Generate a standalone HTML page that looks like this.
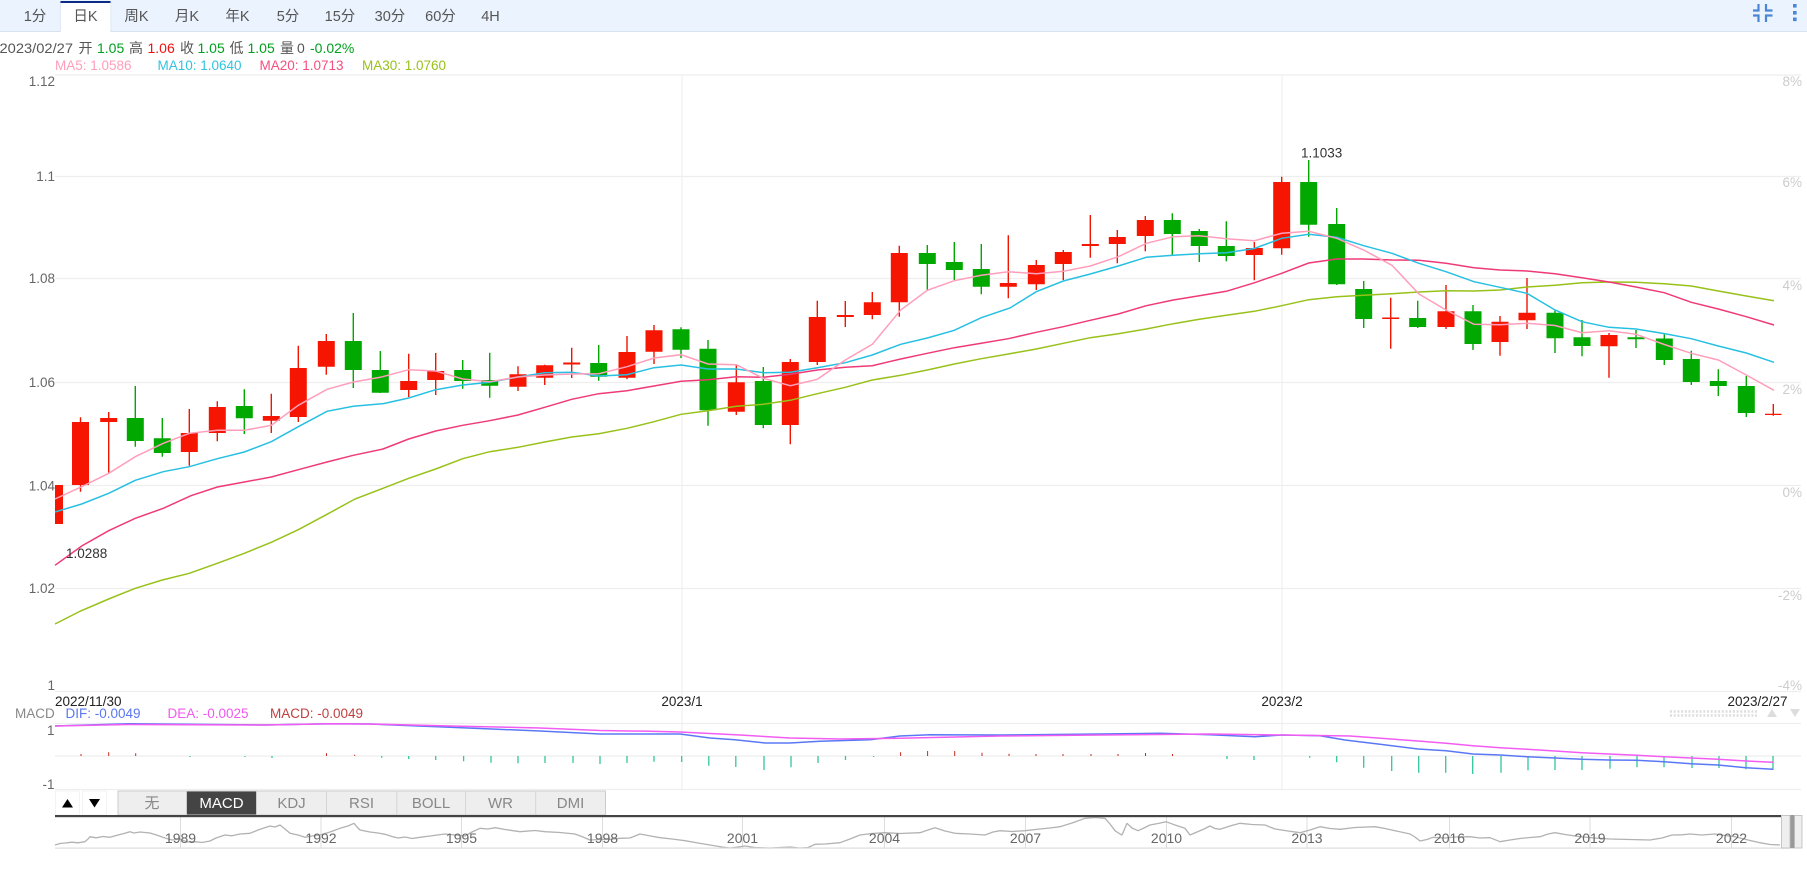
<!DOCTYPE html>
<html lang="zh"><head><meta charset="utf-8"><title>K</title>
<style>
html,body{margin:0;padding:0;background:#fff;width:1807px;height:873px;overflow:hidden}
svg{display:block;font-family:"Liberation Sans","Noto Sans CJK SC",sans-serif}
.t{font-size:14.5px;fill:#555;text-anchor:middle}
.i{font-size:14px;fill:#555}
.g{fill:#00a020}.r{fill:#f01010}
.m{font-size:13.5px}
.l{font-size:13.5px;fill:#666;text-anchor:end}
.p{font-size:13.5px;fill:#ccc;text-anchor:end}
.d{font-size:13.5px;fill:#222}
.y{font-size:14px;fill:#666;text-anchor:middle}
.b{font-size:15px;fill:#888;text-anchor:middle}
</style></head><body>
<svg width="1807" height="873" viewBox="0 0 1807 873" xmlns="http://www.w3.org/2000/svg">
<!-- toolbar -->
<rect x="0" y="0" width="1807" height="31" fill="#ebf3fe"/>
<rect x="0" y="31" width="1807" height="1" fill="#d8e3f2"/>
<rect x="60.5" y="1" width="50" height="31" fill="#fff"/>
<rect x="60" y="1" width="0.8" height="31" fill="#d8e3f2"/><rect x="110.5" y="1" width="0.8" height="31" fill="#d8e3f2"/>
<rect x="60.5" y="1" width="50" height="2" fill="#0b2c86"/>
<text class="t" x="35" y="21">1分</text>
<text class="t" x="85.5" y="21">日K</text>
<text class="t" x="136.5" y="21">周K</text>
<text class="t" x="187" y="21">月K</text>
<text class="t" x="237.5" y="21">年K</text>
<text class="t" x="288" y="21">5分</text>
<text class="t" x="340" y="21">15分</text>
<text class="t" x="390" y="21">30分</text>
<text class="t" x="440.5" y="21">60分</text>
<text class="t" x="490.5" y="21">4H</text>
<path d="M1758.5 4v6.5H1753M1766 4v6.5h6.5M1753 15.5h5.5V22M1772.500 15.500H1766V22" fill="none" stroke="#4a86d8" stroke-width="2.200"/>
<rect x="1793" y="4" width="3.600" height="3.600" fill="#4a86d8"/><rect x="1793" y="11" width="3.600" height="3.600" fill="#4a86d8"/><rect x="1793" y="17.500" width="3.600" height="3.600" fill="#4a86d8"/>
<!-- info line -->
<text class="i" x="-0.500" y="53" textLength="73.500" lengthAdjust="spacingAndGlyphs">2023/02/27</text>
<text class="i" x="78.500" y="53">开</text><text class="i g" x="97" y="53">1.05</text>
<text class="i" x="129" y="53">高</text><text class="i r" x="147.500" y="53">1.06</text>
<text class="i" x="180" y="53">收</text><text class="i g" x="197.500" y="53">1.05</text>
<text class="i" x="229.500" y="53">低</text><text class="i g" x="247.500" y="53">1.05</text>
<text class="i" x="280" y="53">量</text><text class="i" x="297" y="53">0</text>
<text class="i g" x="310" y="53">-0.02%</text>
<text class="m" x="55" y="70" fill="#ff9ebb">MA5: 1.0586</text>
<text class="m" x="157.500" y="70" fill="#33c3e0">MA10: 1.0640</text>
<text class="m" x="259.500" y="70" fill="#f5507f">MA20: 1.0713</text>
<text class="m" x="362" y="70" fill="#98c11a">MA30: 1.0760</text>
<!-- grid -->
<path d="M55 75H1801M55 176.500H1801M55 278.500H1801M55 382.500H1801M55 485.500H1801M55 588.500H1801M55 691.500H1801M55 723.500H1801M55 756H1801M55 789.500H1801" stroke="#eee" stroke-width="1.200" fill="none"/>
<path d="M682 75V790M1282 75V790" stroke="#f0f0f0" stroke-width="1.200" fill="none"/>
<!-- axis labels -->
<text class="l" x="55" y="86">1.12</text><text class="l" x="55" y="181">1.1</text><text class="l" x="55" y="283">1.08</text><text class="l" x="55" y="387">1.06</text><text class="l" x="55" y="490.500">1.04</text><text class="l" x="55" y="593">1.02</text><text class="l" x="55" y="690">1</text>
<text class="p" x="1802" y="86">8%</text><text class="p" x="1802" y="187">6%</text><text class="p" x="1802" y="290">4%</text><text class="p" x="1802" y="394">2%</text><text class="p" x="1802" y="497">0%</text><text class="p" x="1802" y="600">-2%</text><text class="p" x="1802" y="690">-4%</text>
<text class="d" x="55" y="706">2022/11/30</text>
<text class="d" x="682" y="706" text-anchor="middle">2023/1</text>
<text class="d" x="1282" y="706" text-anchor="middle">2023/2</text>
<text class="d" x="1787.500" y="706" text-anchor="end">2023/2/27</text>
<!-- candles -->
<path stroke="#f01500" stroke-width="1.400" fill="none" d="M80.500 417.300V491.700M108.700 412V473M189.300 409V465.700M217.300 401.300V441.300M271.300 393.700V433M298.300 345.700V422M326.300 334V374.700M408.700 353.700V397M435.700 353V395M518 366.300V391M544.700 364.700V385M571.700 347.700V378M627 336V379.300M654 325V364M736.300 365V415M790.300 359V444.300M817.300 300.700V365M845.300 301V327M872.300 292V319.300M899.300 245.700V316.700M1008.300 235.300V298.300M1036.300 260V290M1063.300 250V280M1090.300 215V257.700M1117.300 230V263.300M1145.300 216V251.300M1254.300 242V280.300M1281.700 176.700V254.700M1390.700 297.700V348.700M1446 285V329M1500 316V355.700M1527 278V329M1609 333V377.700M1773.300 404V415.700"/>
<path fill="#f51500" d="M55 485h8v39h-8zM72 422h17v63h-17zM100.200 418h17v4h-17zM180.800 433h17v19h-17zM208.800 407h17v26h-17zM262.800 416h17v4.700h-17zM289.800 368h17v49h-17zM317.800 341h17v25.700h-17zM400.200 381h17v9h-17zM427.200 371h17v9h-17zM509.500 374.300h17v12.400h-17zM536.200 365.300h17v12.400h-17zM563.200 362.500h17v2h-17zM618.500 352h17v25.700h-17zM645.500 330.300h17v21.400h-17zM727.800 382.300h17v29.400h-17zM781.800 362h17v63h-17zM808.800 317h17v45h-17zM836.800 315h17v2h-17zM863.800 302.300h17v12.700h-17zM890.800 253h17v49.300h-17zM999.800 283h17v3.700h-17zM1027.800 265h17v19.300h-17zM1054.800 252h17v12h-17zM1081.800 244h17v2h-17zM1108.800 237h17v7h-17zM1136.800 220h17v16h-17zM1245.800 248h17v7h-17zM1273.200 182h17v66.300h-17zM1382.200 317.500h17v1.500h-17zM1437.500 311.300h17v15.700h-17zM1491.500 321.700h17v20.300h-17zM1518.500 312.700h17v7.600h-17zM1600.500 335h17v11.300h-17zM1765 413.700h16.500v1.300h-16.500z"/>
<path stroke="#00a800" stroke-width="1.400" fill="none" d="M135.300 386V446.700M162.300 418V456.700M244.300 389.300V434M353.300 313V388M380.300 351V393M462.700 360V388.700M489.700 352.700V397.700M598.700 345V380.700M681 327.300V358M708 340V425.700M763.300 367V428.300M927.300 245V290.300M954.300 242V280M981.300 244V294.300M1172.300 213.300V255.300M1199.300 229V262M1226.300 221.300V261.300M1308.700 160V236.700M1336.700 208V285M1363.700 281V328M1417.700 300.700V328M1473 305V350M1555 310V353M1582 320V356.300M1636 330V348M1664.300 333.500V365M1691.300 350.700V385M1718.300 369.300V396M1746.300 376V417"/>
<path fill="#00a800" d="M126.800 418h17v23h-17zM153.800 438.300h17v14.700h-17zM235.800 406h17v12.300h-17zM344.800 341h17v29h-17zM371.800 370h17v22.700h-17zM454.200 370h17v11h-17zM481.200 380h17v5.700h-17zM590.200 363h17v13.700h-17zM672.500 329.300h17v20.400h-17zM699.500 348.700h17v61.600h-17zM754.800 381h17v44h-17zM918.800 253h17v11h-17zM945.800 262h17v8h-17zM972.800 269h17v17.700h-17zM1163.800 220h17v14h-17zM1190.800 231h17v15h-17zM1217.800 246h17v10h-17zM1300.200 182h17v42.700h-17zM1328.200 224h17v60.300h-17zM1355.200 289h17v30h-17zM1409.200 318h17v9h-17zM1464.500 311.300h17v32.700h-17zM1546.500 312.700h17v25.600h-17zM1573.500 337.300h17v8.700h-17zM1627.500 337.300h17v2h-17zM1655.800 338.500h17v21.500h-17zM1682.800 359h17v23h-17zM1709.800 381h17v5h-17zM1737.800 386h17v27h-17z"/>
<!-- MA lines -->
<polyline fill="none" stroke="#98c11a" stroke-width="1.500" points="55,624 80.500,611 108.700,599 135.300,588.300 162.300,580 189.300,573.300 217.300,563.300 244.300,553.300 271.300,542.300 298.300,529.700 327,514.300 355,499 383,488.300 408.700,478.300 435.700,469 462.700,458.700 489.700,451.700 518,447.300 544.700,442 571.700,437 598.700,433.700 627,428.300 654,421.700 681,414.300 708,410.700 736.300,406.300 763.300,404.300 790.300,400.300 817.300,393.700 845.300,387.300 872.300,380 900.700,375.300 927.300,370 954.300,364 981.300,358.700 1008.300,354 1036.300,349 1063.300,343.300 1090.300,337.700 1118.300,333.700 1146.300,329 1173.300,323.700 1199.300,319.300 1226.300,315.300 1254.300,311.300 1281.700,305.700 1308.700,299.700 1336.700,296.700 1363.700,295.300 1392,293.700 1419,292 1446,290.700 1474,291 1500,290 1527,287 1555,285.300 1582,282.700 1609,282 1636,282.300 1664.300,283.800 1691.300,286 1718.300,291 1746.300,296 1774,300.700"/>
<polyline fill="none" stroke="#ef3a78" stroke-width="1.500" points="55,565.300 81.700,546 108.700,530.700 135.300,518.300 163.300,508.300 191,495.700 217.300,487 244.300,482 271.300,477 298.300,469.700 327,462 353.300,455.300 383,449 408.700,439 435.700,431 462.700,425.300 489.700,420.700 518,415 544.700,407.300 571.700,399.300 598.700,393.700 627,390.700 654,386 681,381.300 708,379.700 736.300,376.700 763.300,377.300 790.300,374.300 817.300,370 845.300,367.300 872.300,365.700 900.700,359 927.300,353.300 954.300,347.700 981.300,343.300 1008.300,338.700 1036.300,332.300 1063.300,326.700 1090.300,320.300 1118.300,314 1146.300,305.700 1173.300,300 1199.300,295.700 1226.300,291.300 1254.300,282.800 1281.700,273.300 1308.700,263 1336.700,259 1363.700,259 1392,260 1419,260.300 1446,263.300 1474,267.700 1500,270 1527,271 1555,273.700 1582,277.700 1609,282 1636,287 1664.300,292.700 1691.300,302.300 1718.300,309 1746.300,316.700 1774,325"/>
<polyline fill="none" stroke="#27c0e2" stroke-width="1.500" points="55,512 81.700,504 108.700,493.300 135.300,480.300 163.300,471.700 189.300,466.700 217.300,458.700 244.300,452 271.300,441.700 298.300,426.700 327,411.300 353.300,406.300 383,403.700 408.700,398 435.700,389.700 462.700,385 489.700,382.300 518,377 544.700,372.700 571.700,372.300 598.700,376 627,374.700 654,367.700 681,365 708,369 736.300,369 763.300,372.700 790.300,372.300 817.300,367.700 845.300,362.700 872.300,355 900.700,344.300 927.300,338 954.300,330.300 981.300,317.700 1010,308 1036.300,291.700 1063.300,281 1090.300,274 1118.300,266 1146.300,257.300 1173.300,255.300 1199.300,253.700 1226.300,252.700 1254.300,248.500 1281.700,238.300 1308.700,234.300 1336.700,237.300 1363.700,245.700 1392,253.300 1419,263.300 1446,271.700 1474,281.700 1500,287.300 1527,293.300 1555,310 1582,321.700 1609,327.300 1636,329 1664.300,333.600 1691.300,338.700 1718.300,346 1746.300,353 1774,362.300"/>
<polyline fill="none" stroke="#ff9ebb" stroke-width="1.500" points="55,499 81.700,486.700 108.700,473.300 135.300,456.700 163.300,443.300 189.300,433.300 217.300,430.300 244.300,430.300 271.300,425.300 298.300,405.300 327,389.300 353.300,382 380.300,377.300 408.700,369.700 435.700,371 462.700,379 489.700,381.700 518,377 544.700,375 571.700,374 598.700,373.700 627,366.700 654,358 681,354.700 708,364 736.300,364.700 763.300,378.300 790.300,385.700 817.300,379.300 845.300,360 872.300,344.300 900.700,310 927.300,290.300 954.300,280.700 981.300,275.300 1008.300,271.700 1036.300,273.700 1063.300,271.300 1090.300,266 1118.300,256.700 1146.300,243.300 1173.300,236.700 1199.300,235.700 1226.300,238.700 1254.300,240.700 1281.700,233.300 1308.700,231.300 1336.700,238.300 1363.700,250 1392,265.300 1419,294 1446,310 1474,324.300 1500,324.700 1527,323.300 1555,325.500 1582,332.700 1609,330.700 1636,334.300 1664.300,344.500 1691.300,353.300 1718.300,360 1746.300,375 1774,390.300"/>
<text x="66" y="558" font-size="13.500" fill="#333">1.0288</text>
<text x="1301" y="157.500" font-size="13.500" fill="#333">1.1033</text>
<!-- MACD legend -->
<text x="15" y="718" font-size="13.500" fill="#888">MACD</text>
<text x="65.500" y="718" font-size="13.500" fill="#5a78f0">DIF: -0.0049</text>
<text x="167.500" y="718" font-size="13.500" fill="#f058f0">DEA: -0.0025</text>
<text x="270" y="718" font-size="13.500" fill="#c04040">MACD: -0.0049</text>
<text class="l" x="54.500" y="735">1</text><text class="l" x="54.500" y="789">-1</text>
<path d="M1670 711.500h87M1670 715.500h87" stroke="#ddd" stroke-width="2.500" stroke-dasharray="2 1.700" fill="none"/>
<polygon points="1767,717 1777,717 1772,709" fill="#ddd"/><polygon points="1790,709 1800,709 1795,717" fill="#ddd"/>
<!-- MACD histogram -->
<path stroke="#c62a1c" stroke-width="1" fill="none" d="M81 756V754M108.700 756V752.300M135.700 756V753.300M326.500 756V753.300M354.700 756V754.700M900.600 756V752.300M927.600 756V751M954.700 756V751M982 756V752.700M1009 756V753.700M1036 756V754M1063 756V754M1091 756V754M1118 756V754M1145.500 756V753M1172.500 756V754"/>
<path stroke="#33c59e" stroke-width="1.300" fill="none" d="M190 756V757M245 756V757M272 756V758M381.700 756V757.700M408.700 756V759M435.700 756V760M463.600 756V761.300M491 756V762.700M518 756V763.300M545 756V763M573 756V763M600 756V764M627 756V763M654 756V761.700M681.700 756V762M708.800 756V765.700M735.800 756V767M764 756V770M791 756V767.300M818 756V763M845.500 756V760M873.600 756V757M1227 756V759M1254 756V760M1309.700 756V757.700M1336.700 756V762.300M1363.700 756V767.700M1391.700 756V771M1418.700 756V772.700M1445.700 756V772.700M1472.700 756V774M1501 756V772.700M1528 756V770.300M1555 756V770M1582 756V770M1610 756V768.700M1637 756V767.300M1664 756V767.300M1692 756V768M1719 756V768M1746 756V769.300M1773 756V770"/>
<polyline fill="none" stroke="#5a78f5" stroke-width="1.500" points="55,726 130,723.700 265,725 330,723.700 370,724 450,727.300 540,731 600,734 650,734 680,734 710,738 735,739.700 765,743 790,743 820,741.300 870,739.700 900,736 930,734.700 1000,735 1100,734 1160,733.300 1210,734.700 1255,736.700 1282,735 1320,735.700 1345,740 1380,744.300 1418,749 1446,750.700 1473,754 1500,755 1527,756.700 1555,758 1582,759.300 1609,760 1637,760.300 1664,761.700 1691,763.700 1718,765 1746,767.700 1773,769.300"/>
<polyline fill="none" stroke="#f25cf2" stroke-width="1.500" points="55,726 130,724.500 265,725 330,723.700 370,724 450,726 540,728 600,730.500 650,731.300 680,732 740,735 790,738 840,739 900,738.300 1000,736 1100,735 1210,734 1282,735 1350,736 1418,741 1446,743.300 1473,745.700 1500,747.700 1527,749.300 1555,751 1582,752.700 1609,754 1637,755.300 1664,756.700 1691,758 1718,759.300 1746,761 1773,762.300"/>
<!-- tabs -->
<rect x="55.500" y="791" width="24" height="24" fill="#fff" stroke="#f3f3f3"/>
<rect x="82.500" y="791" width="24" height="24" fill="#fff" stroke="#f3f3f3"/>
<polygon points="62,807.500 73,807.500 67.500,799" fill="#000"/>
<polygon points="89,799 100,799 94.500,807.500" fill="#000"/>
<rect x="118" y="791" width="487.500" height="24" fill="#eee" stroke="#ccc"/>
<path d="M326.500 791V815M396.800 791V815M465.600 791V815M535.700 791V815" stroke="#d5d5d5"/>
<rect x="186.500" y="791" width="70" height="24" fill="#444" stroke="#ccc"/>
<text class="b" x="152" y="808">无</text>
<text class="b" x="221.500" y="808" style="fill:#fff">MACD</text>
<text class="b" x="291.500" y="808">KDJ</text>
<text class="b" x="361.500" y="808">RSI</text>
<text class="b" x="431" y="808">BOLL</text>
<text class="b" x="500.500" y="808">WR</text>
<text class="b" x="570.500" y="808">DMI</text>
<!-- mini chart -->
<path d="M180.500 817V848M321 817V848M461.500 817V848M602.500 817V848M742.500 817V848M884.500 817V848M1025.500 817V848M1166.500 817V848M1307 817V848M1449.500 817V848M1590 817V848M1731.500 817V848" stroke="#ddd" fill="none"/>
<polyline fill="none" stroke="#b2b2b2" stroke-width="1.300" stroke-linejoin="bevel" points="55,845 60,843.500 65,843 72,842.200 78,842.800 85,841.700 88,839 90,836.700 96,837.800 103,836.500 110,837.300 118,835 124,833.500 130,831.700 134,833 140,832 150,833 158,835.500 165,838 172,840 180,839 187,842 195,841.700 202,842.500 210,841 216,838 225,835 232,835.800 240,834 250,833.300 258,830 264,828 270,826 275,827 280,825 285,829 290,833.300 298,835 305,837.300 312,836 320,835 330,832 340,828.300 348,826 354,823.300 357,827 360,830 370,832 378,833 385,834.300 392,836.500 398,838 405,837 412,838.500 420,837.300 430,836 445,834 455,835 465,836 472,832 480,828.300 488,829 495,827.700 505,829.500 520,831.700 535,830.500 545,831.700 560,832.500 575,834 583,837 590,840 600,839.500 610,839.300 620,838.300 630,838 640,834 648,835.500 660,837.700 672,839 685,840.700 698,843 710,845 722,847 730,848 738,847 745,846 755,847.500 770,848 780,847.500 790,847 800,848 808,847.500 815,844.300 825,844 840,842.700 850,839 860,835 872,833.500 885,832.700 900,833.500 920,832.700 928,830 935,827.700 945,831 955,833.300 970,834 985,835 993,832 1000,830.700 1012,831.500 1025,830.700 1040,829 1050,828 1060,826.700 1072,823 1085,818.300 1095,817.500 1105,818.300 1110,824 1115,830.700 1120,834 1122,835 1127,823.300 1132,828 1138,830.700 1144,828 1150,825 1158,823.500 1166,821.700 1175,825 1185,828.300 1190,835 1197,832 1204,829 1210,826 1215,828.500 1220,829.300 1230,826 1240,823.300 1252,824.500 1265,825 1275,829 1288,831 1300,832.700 1310,830 1320,826.700 1330,828.500 1340,829.300 1355,827.500 1375,826.700 1385,828.500 1395,830.700 1410,834 1415,837 1420,841 1427,839.500 1433,837.300 1445,838 1455,837 1470,836.700 1480,838 1490,837.700 1500,841.700 1510,840 1520,838.500 1530,837.500 1540,836.700 1548,834 1555,832.700 1565,834.500 1580,836.700 1595,838 1610,839 1630,839.500 1650,840 1662,838 1672,835 1682,834.800 1690,834 1702,835 1715,834 1725,835.500 1735,836.700 1748,840 1760,842.700 1770,844.500 1780,845"/>
<text class="y" x="180.500" y="843">1989</text><text class="y" x="321" y="843">1992</text><text class="y" x="461.500" y="843">1995</text><text class="y" x="602.500" y="843">1998</text><text class="y" x="742.500" y="843">2001</text><text class="y" x="884.500" y="843">2004</text><text class="y" x="1025.500" y="843">2007</text><text class="y" x="1166.500" y="843">2010</text><text class="y" x="1307" y="843">2013</text><text class="y" x="1449.500" y="843">2016</text><text class="y" x="1590" y="843">2019</text><text class="y" x="1731.500" y="843">2022</text>
<rect x="55" y="815" width="1726" height="2.200" fill="#444"/>
<rect x="55" y="847.500" width="1740" height="1.200" fill="#ddd"/>
<rect x="1790" y="815" width="4.500" height="33" fill="#999"/>
<rect x="1781.500" y="815.500" width="8.500" height="32.500" fill="#eee" stroke="#bbb" stroke-width="0.800"/>
<rect x="1794.500" y="815.500" width="7.500" height="32.500" fill="#eee" stroke="#bbb" stroke-width="0.800"/>
</svg>
</body></html>
